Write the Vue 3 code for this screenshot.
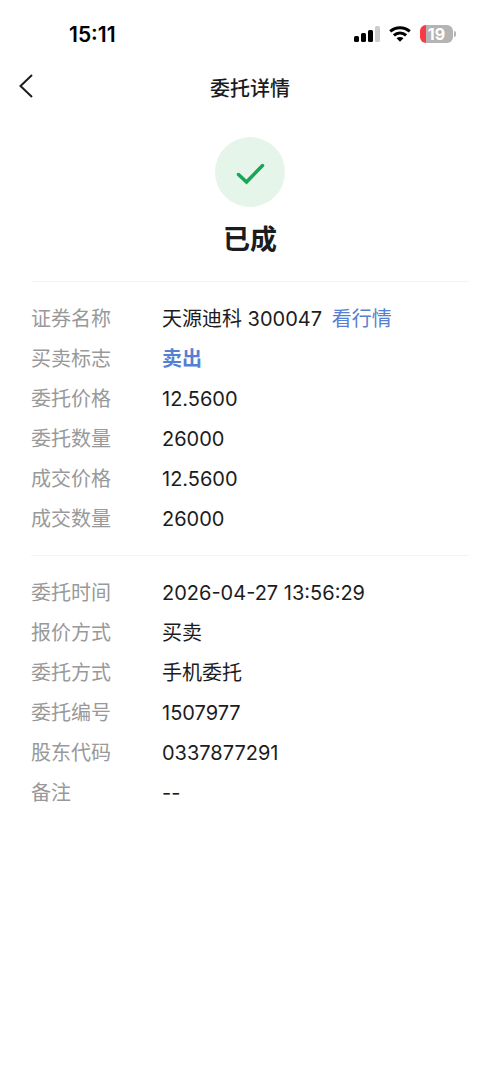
<template>
  <div class="page">
    <!-- 状态栏 -->
    <div class="status-bar">
      <span class="time">15:11</span>
      <div class="status-icons">
        <svg class="signal" viewBox="0 0 26 16" aria-hidden="true">
          <rect x="0" y="10" width="5" height="6" rx="1.5" />
          <rect x="7" y="7" width="5" height="9" rx="1.5" />
          <rect x="14" y="4" width="5" height="12" rx="1.5" />
          <rect class="weak" x="21" y="0" width="5" height="16" rx="1.5" />
        </svg>
        <svg class="wifi" viewBox="0 0 22 16" aria-hidden="true">
          <path d="M1.2 5.4C6.800 .4 15.200 .4 20.800 5.400" />
          <path d="M4.900 9.300C8.400 6.100 13.600 6.100 17.100 9.300" />
          <path class="dot" d="M7.500 12.200C9.500 10.500 12.500 10.500 14.500 12.200L11 15.800Z" />
        </svg>
        <div class="battery">
          <span class="battery-body">19</span>
          <span class="battery-cap"></span>
        </div>
      </div>
    </div>

    <!-- 导航栏 -->
    <header class="nav-bar">
      <button class="back-btn" type="button" aria-label="返回" @click="goBack">
        <svg viewBox="0 0 14 24" aria-hidden="true">
          <path d="M13 1L1.500 12L13 23" />
        </svg>
      </button>
      <h1 class="nav-title">委托详情</h1>
    </header>

    <main class="content">
      <!-- 委托结果 -->
      <div class="result">
        <div class="result-icon">
          <svg viewBox="0 0 30 26" aria-hidden="true">
            <path d="M3.500 15.500L11.500 23L27.500 6.500" />
          </svg>
        </div>
        <h2 class="result-text">已成</h2>
      </div>

      <dl v-for="(group, index) in groups" :key="index" class="group">
        <div v-for="item in group" :key="item.label" class="row">
          <dt class="label">{{ item.label }}</dt>
          <dd class="value" :class="{ sell: item.sell }">
            {{ item.value }}
            <a v-if="item.link" href="#" class="link" @click.prevent>{{ item.link }}</a>
          </dd>
        </div>
      </dl>
    </main>
  </div>
</template>

<script setup>
import { ref } from 'vue'

const groups = ref([
  // 证券与成交信息
  [
    { label: '证券名称', value: '天源迪科 300047', link: '看行情' },
    { label: '买卖标志', value: '卖出', sell: true },
    { label: '委托价格', value: '12.5600' },
    { label: '委托数量', value: '26000' },
    { label: '成交价格', value: '12.5600' },
    { label: '成交数量', value: '26000' }
  ],
  // 委托信息
  [
    { label: '委托时间', value: '2026-04-27 13:56:29' },
    { label: '报价方式', value: '买卖' },
    { label: '委托方式', value: '手机委托' },
    { label: '委托编号', value: '1507977' },
    { label: '股东代码', value: '0337877291' },
    { label: '备注', value: '--' }
  ]
])

// 返回上一页
const goBack = () => {
  window.history.back()
}
</script>

<style>
body {
  background: #fff;
}
</style>

<style scoped>
.page {
  min-height: 100vh;
  background: #fff;
  color: #1c1c1e;
  font-family: Inter, "Noto Sans CJK SC", sans-serif;
  font-size: 20px;
}

.status-bar {
  display: flex;
  align-items: center;
  justify-content: space-between;
  height: 68px;
  padding: 0 44px 0 69px;
  box-sizing: border-box;
}

.time {
  color: #000;
  font-size: 21px;
  font-weight: 600;
}

.status-icons {
  display: flex;
  align-items: center;
  gap: 9px;
}

.signal {
  width: 26px;
  height: 16px;
}

.signal .weak {
  fill: #ccc;
}

.wifi {
  width: 22px;
  height: 16px;
  fill: none;
  stroke: #000;
  stroke-width: 3;
}

.wifi .dot {
  fill: #000;
  stroke: none;
}

.battery {
  display: flex;
  align-items: center;
  gap: 1px;
}

.battery-body {
  width: 33px;
  height: 18px;
  border-radius: 6px;
  background: linear-gradient(to right, #fa3846 6px, #b4b4b4 6px);
  color: #fff;
  font-size: 16px;
  font-weight: 700;
  line-height: 18px;
  text-align: center;
}

.battery-cap {
  width: 2px;
  height: 6px;
  border-radius: 0 2px 2px 0;
  background: #b4b4b4;
}

.nav-bar {
  display: grid;
  grid-template-columns: 52px 1fr 52px;
  align-items: center;
  height: 42px;
}

.back-btn {
  display: flex;
  align-items: center;
  height: 42px;
  padding: 0 0 6px 19px;
  border: none;
  background: none;
  cursor: pointer;
}

.back-btn svg {
  width: 14px;
  height: 24px;
  fill: none;
  stroke: #1c1c1e;
  stroke-width: 2;
}

.nav-title {
  margin: 0;
  font-size: 20px;
  font-weight: 500;
  line-height: 42px;
  text-align: center;
}

.content {
  padding: 27px 31px;
}

.result {
  display: flex;
  flex-direction: column;
  align-items: center;
  padding-bottom: 21px;
}

.result-icon {
  display: flex;
  align-items: center;
  justify-content: center;
  width: 70px;
  height: 70px;
  border-radius: 50%;
  background: #e6f5ea;
}

.result-icon svg {
  width: 30px;
  height: 26px;
  fill: none;
  stroke: #17a558;
  stroke-width: 3.5;
  stroke-linecap: round;
}

.result-text {
  margin: 13px 0 0;
  font-size: 27px;
  font-weight: 700;
  line-height: 40px;
}

.group {
  margin: 0;
  padding: 17px 0 16px;
  border-top: 1px solid #f4f4f4;
}

.row {
  display: flex;
  line-height: 40px;
}

.label {
  flex: none;
  width: 131px;
  color: #999;
}

.value {
  flex: 1;
  margin: 0;
}

.sell {
  color: #557fd3;
  font-weight: 700;
}

.link {
  margin-left: 4px;
  color: #557fd3;
  text-decoration: none;
}
</style>
